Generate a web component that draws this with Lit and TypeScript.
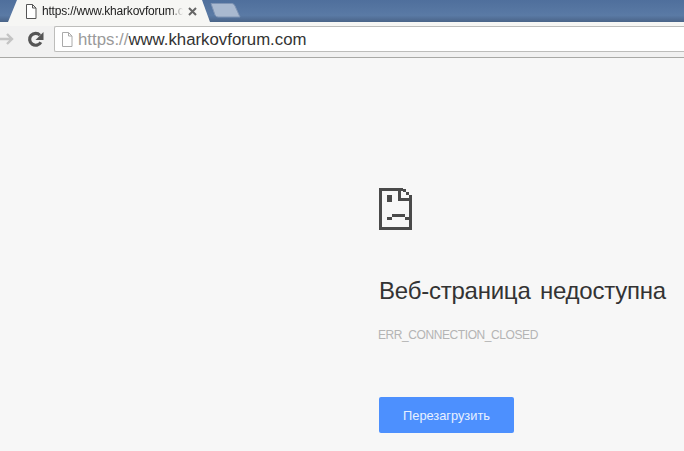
import { LitElement, html, css, svg } from "lit";
import { customElement } from "lit/decorators.js";

@customElement("app-root")
export class AppRoot extends LitElement {
  static styles = css`
    :host { display: block; width: 684px; height: 451px; overflow: hidden; background: #f7f7f7; font-family: "Liberation Sans", sans-serif; }
    .strip { height: 22px; background: linear-gradient(#4f6f9c, #5a7aa5 70%, #4a6488); display: flex; position: relative; }
    .tabshape { position: absolute; left: 0; top: 0; }
    .tab { position: relative; width: 205px; height: 22px; display: flex; align-items: center; padding-left: 25px; box-sizing: border-box; }
    .tabicon { flex: none; }
    .tabtitle { margin-left: 5px; width: 141px; font-size: 12px; letter-spacing: -0.2px; color: #222; white-space: nowrap; overflow: hidden; -webkit-mask-image: linear-gradient(to right, #000 128px, transparent 141px); mask-image: linear-gradient(to right, #000 128px, transparent 141px); }
    .close { margin-left: 5px; flex: none; }
    .toolbar { height: 36px; box-sizing: border-box; background: #f1f1f1; border-top: 4px solid #f6f6f4; border-bottom: 1px solid #a9a9a6; padding-bottom: 5px; display: flex; align-items: center; }
    .nav { width: 54px; flex: none; display: flex; align-items: center; box-sizing: border-box; gap: 13px; }
    .omni { flex: 1; height: 26px; box-sizing: border-box; background: #fff; border: 1px solid #bdbdbb; border-right: none; border-radius: 2px 0 0 2px; display: flex; align-items: center; padding-left: 6px; }
    .url { margin-left: 5px; padding-top: 2px; font-size: 16.8px; color: #333; white-space: nowrap; }
    .url span { color: #9a9a9a; }
    .page { padding: 130px 0 0 379px; display: flex; flex-direction: column; align-items: flex-start; }
    .sad { display: block; }
    h1 { margin: 46px 0 0; font: 400 24px/30px "Liberation Sans", sans-serif; letter-spacing: -0.23px; color: #333; white-space: nowrap; word-spacing: 3px; }
    .code { margin-top: 22px; margin-left: -1px; font-size: 12px; line-height: 14px; letter-spacing: -0.42px; color: #b4b4b4; white-space: nowrap; }
    button { margin-top: 55px; width: 135px; height: 36px; border: none; border-radius: 2px; background: #4d90fe; color: #e8f0ff; font: 400 12.8px "Liberation Sans", sans-serif; padding: 0; }
  `;

  private pageIcon(stroke: string, w: number, h: number) {
    return html`<svg class="tabicon" width=${w} height=${h} viewBox="0 0 12 15" fill="#fff" stroke=${stroke} stroke-width="1">
      <path d="M1.5 .5H7.5L11 4V14.5H1.5Z M7.5 .5V4H11" /></svg>`;
  }

  private sadIcon() {
    const c = "#4a4a4a";
    const rects = [
      [0, 0, 24, 3], [0, 0, 3, 42], [0, 39, 33, 3], [30, 10, 3, 32],
      [19, 0, 3, 13], [19, 10, 14, 3], [24, 1, 3, 3], [27, 4, 3, 3], [30, 7, 3, 3],
      [8, 7, 5, 7], [13, 26, 13, 3], [8, 29, 5, 3], [26, 29, 5, 3],
    ];
    return html`<svg class="sad" width="33" height="42" viewBox="0 0 33 42" shape-rendering="crispEdges">
      ${rects.map(([x, y, w, h]) => svg`<rect x=${x} y=${y} width=${w} height=${h} fill=${c} />`)}
    </svg>`;
  }

  render() {
    return html`
      <div class="strip">
        <svg class="tabshape" width="250" height="22" viewBox="0 0 250 22">
          <path d="M8 22 L17 0 H202 L210 22 Z" fill="#f6f6f4" />
          <path d="M211 3.5 H232 Q234 3.5 235 6 L240 17 H218 Q216 17 215 15 Z" fill="#a9b9d0" stroke="#7f94b4" />
        </svg>
        <div class="tab">
          ${this.pageIcon("#555", 12, 15)}
          <div class="tabtitle">https://www.kharkovforum.com</div>
          <svg class="close" width="9" height="9" viewBox="0 0 9 9" stroke="#666" stroke-width="2"><path d="M1 1L8 8M8 1L1 8" /></svg>
        </div>
      </div>
      <div class="toolbar">
        <div class="nav">
          <svg width="14" height="12" viewBox="0 0 14 12" fill="none" stroke="#c4c4c4" stroke-width="2.4"><path d="M0 6H12M7 1L12 6L7 11" /></svg>
          <svg width="17" height="17" viewBox="0 0 16 16" fill="none"><path d="M13 10.5A5.6 5.6 0 1 1 12.2 4" stroke="#555" stroke-width="3" /><path d="M15.5 1V8.5H8Z" fill="#555" /></svg>
        </div>
        <div class="omni">
          ${this.pageIcon("#aaa", 12, 15)}
          <div class="url"><span>https://</span>www.kharkovforum.com</div>
        </div>
      </div>
      <div class="page">
        ${this.sadIcon()}
        <h1>Веб-страница недоступна</h1>
        <div class="code">ERR_CONNECTION_CLOSED</div>
        <button>Перезагрузить</button>
      </div>
    `;
  }
}
